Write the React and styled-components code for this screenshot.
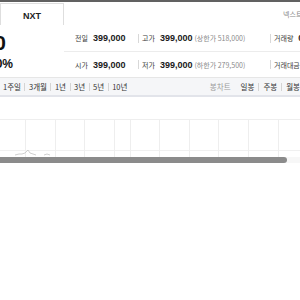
import styled, { createGlobalStyle } from "styled-components";

const GlobalStyle = createGlobalStyle`
  html, body {
    margin: 0;
    padding: 0;
    background: #fff;
    overflow: hidden;
  }
  body {
    font-family: "Noto Sans CJK KR", "Noto Sans", sans-serif;
    color: #333;
  }
`;

const Frame = styled.div`
  width: 300px;
  height: 300px;
  overflow: hidden;
  border-top: 2px solid #616161;
  box-sizing: border-box;
`;

/* header is wider than the window, scrolled 100px to the left */
const Header = styled.div`
  margin-left: -100px;
  width: 600px;
`;

const TabRow = styled.div`
  display: flex;
  align-items: flex-end;
  height: 23px;
  padding-left: 36px;
`;

const Tab = styled.div`
  width: 64px;
  height: 22px;
  flex-shrink: 0;
  box-sizing: border-box;
  border: 1px solid #dedede;
  border-bottom: none;
  background: ${(p) => (p.active ? "#fff" : "#f4f4f4")};
  font-family: "Liberation Sans", Arial, sans-serif;
  font-weight: bold;
  font-size: 9px;
  color: #222;
  display: flex;
  align-items: center;
  justify-content: center;
  padding-top: 3px;
`;

const Note = styled.div`
  margin-left: 219px;
  align-self: center;
  font-size: 7px;
  color: #888;
  white-space: nowrap;
`;

const Summary = styled.div`
  display: flex;
  height: 52px;
`;

const PriceCol = styled.div`
  width: 164px;
  flex-shrink: 0;
  display: flex;
  flex-direction: column;
  align-items: flex-end;
  font-family: "Liberation Sans", Arial, sans-serif;
  font-weight: bold;
  color: #111;
  white-space: nowrap;
`;

const Price = styled.div`
  font-size: 21px;
  line-height: 21px;
  margin-top: 7px;
  margin-right: ${(p) => p.shift}px;
`;

const Rate = styled.div`
  font-size: 12px;
  line-height: 13px;
  margin-top: 5px;
  margin-right: ${(p) => p.shift}px;
`;

const Info = styled.div`
  flex: 1;
  display: flex;
  flex-direction: column;
`;

const InfoRow = styled.div`
  height: 26px;
  display: flex;
  align-items: center;
  border-top: ${(p) => (p.first ? "none" : "1px solid #ececec")};
  box-sizing: border-box;
`;

const Cell = styled.div`
  width: ${(p) => p.w}px;
  display: flex;
  align-items: center;
  padding-left: ${(p) => p.pad}px;
  box-sizing: border-box;
  white-space: nowrap;
  flex-shrink: 0;
`;

const Bar = styled.span`
  width: 1px;
  height: 9px;
  background: #d8d8d8;
  margin-right: 3px;
`;

const Label = styled.span`
  font-size: 7px;
  color: #3a3a3a;
  margin-right: 5px;
`;

const Value = styled.span`
  font-family: "Liberation Sans", Arial, sans-serif;
  font-weight: bold;
  font-size: 9px;
  color: #1a1a1a;
  margin-right: 2px;
`;

const Sub = styled.span`
  font-size: 7px;
  color: #8a8a8a;
`;

const Toolbar = styled.div`
  height: 20px;
  box-sizing: border-box;
  display: flex;
  align-items: center;
  justify-content: space-between;
  background: #f5f6f8;
  border-top: 1px solid #e6e6e6;
  border-bottom: 2px solid #e2e4ea;
  padding-left: 3px;
  white-space: nowrap;
  overflow: hidden;
`;

const Group = styled.div`
  display: flex;
  align-items: center;
  gap: ${(p) => (p.tight ? 3.5 : 4)}px;
`;

const Item = styled.span`
  font-size: 7.5px;
  color: ${(p) => (p.muted ? "#9a9a9a" : "#333")};
  margin-right: ${(p) => (p.gap ? p.gap : 0)}px;
`;

const Sep = styled.span`
  width: 1px;
  height: 8px;
  background: #d4d4d4;
`;

const ChartArea = styled.div`
  padding-top: 22px;
`;

const Grid = styled.svg`
  display: block;
`;

const Track = styled.div`
  height: 6px;
  background: #f7f7f7;
`;

const Thumb = styled.div`
  height: 6px;
  background: #8b8b8b;
  border-radius: 0 3px 3px 0;
`;

const periods = ["1주일", "3개월", "1년", "3년", "5년", "10년"];
const candles = ["일봉", "주봉", "월봉"];
const gridX = [25, 55, 84, 114, 130, 159, 189, 218, 248, 278];

function App() {
  return (
    <>
      <GlobalStyle />
      <Frame>
        <Header>
          <TabRow>
            <Tab>KRX</Tab>
            <Tab active>NXT</Tab>
            <Note>넥스트레이드 기준</Note>
          </TabRow>
          <Summary>
            <PriceCol>
              <Price shift={58}>399,000</Price>
              <Rate shift={51}>0 0.00%</Rate>
            </PriceCol>
            <Info>
              <InfoRow first>
                <Cell w={72} pad={11}>
                  <Label>전일</Label>
                  <Value>399,000</Value>
                </Cell>
                <Cell w={132} pad={2}>
                  <Bar />
                  <Label>고가</Label>
                  <Value>399,000</Value>
                  <Sub>(상한가 518,000)</Sub>
                </Cell>
                <Cell w={120} pad={2}>
                  <Bar />
                  <Label>거래량</Label>
                  <Value>0</Value>
                </Cell>
              </InfoRow>
              <InfoRow>
                <Cell w={72} pad={11}>
                  <Label>시가</Label>
                  <Value>399,000</Value>
                </Cell>
                <Cell w={132} pad={2}>
                  <Bar />
                  <Label>저가</Label>
                  <Value>399,000</Value>
                  <Sub>(하한가 279,500)</Sub>
                </Cell>
                <Cell w={120} pad={2}>
                  <Bar />
                  <Label>거래대금</Label>
                  <Value>0</Value>
                </Cell>
              </InfoRow>
            </Info>
          </Summary>
        </Header>
        <Toolbar>
          <Group tight>
            {periods.map((p, i) => (
              <Group tight key={p}>
                {i > 0 && <Sep />}
                <Item>{p}</Item>
              </Group>
            ))}
          </Group>
          <Group>
            <Item muted gap={6}>봉차트</Item>
            {candles.map((c, i) => (
              <Group key={c}>
                {i > 0 && <Sep />}
                <Item>{c}</Item>
              </Group>
            ))}
          </Group>
        </Toolbar>
        <ChartArea>
          <Grid width="300" height="38" viewBox="0 0 300 38">
            <line x1="0" y1="0.5" x2="300" y2="0.5" stroke="#eeeeee" />
            <line x1="0" y1="31.5" x2="300" y2="31.5" stroke="#f0f0f0" />
            {gridX.map((x) => (
              <line key={x} x1={x + 0.5} y1="0" x2={x + 0.5} y2="38" stroke="#eeeeee" />
            ))}
            <polyline
              points="15,36 19,35 22,35 25,34 28,31 30,34 33,35 36,36"
              fill="none"
              stroke="#c4c4c4"
              strokeWidth="0.8"
            />
            <polyline points="44,36 47,35 50,36" fill="none" stroke="#c4c4c4" strokeWidth="0.8" />
          </Grid>
          <Track>
            <Thumb style={{ width: 287 }} />
          </Track>
        </ChartArea>
      </Frame>
    </>
  );
}

export default App;
